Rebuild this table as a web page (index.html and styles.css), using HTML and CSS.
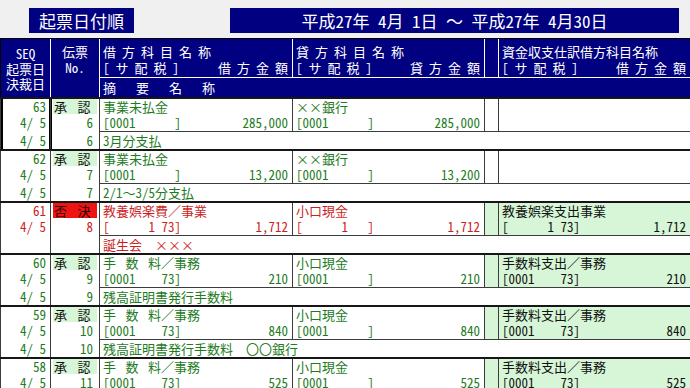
FILE: index.html
```html
<!DOCTYPE html>
<html lang="ja">
<head>
<meta charset="utf-8">
<title>起票日付順</title>
<link rel="stylesheet" href="styles.css">
</head>
<body>
<div class="top">
  <div class="title">起票日付順</div>
  <div class="range">平成27年 4月 1日 ～ 平成27年 4月30日</div>
</div>
<div class="sheet">
  <div class="head">
    <div class="h1"><span>SEQ</span><span>起票日</span><span>決裁日</span></div>
    <div class="h2">伝票<br>No.</div>
    <div class="hc"><div class="sp">借方科目名<i>称</i></div><div class="hl2"><span class="sp">[サ配税<i>]</i></span><span class="sp">借方金<i>額</i></span></div></div>
    <div class="hc"><div class="sp">貸方科目名<i>称</i></div><div class="hl2"><span class="sp">[サ配税<i>]</i></span><span class="sp">貸方金<i>額</i></span></div></div>
    <div class="hn"></div>
    <div class="hc"><div>資金収支仕訳借方科目名称</div><div class="hl2"><span class="sp">[サ配税<i>]</i></span><span class="sp">借方金<i>額</i></span></div></div>
    <div class="hmemo">摘要名<i>称</i></div>
  </div>

  <div class="rec sel">
    <div class="c1"><div>63</div><div>4/ 5</div><div class="l3">4/ 5</div></div>
    <div class="c2"><div class="st">承 認</div><div>6</div><div class="l3">6</div></div>
    <div class="cc"><div>事業未払金</div><div class="amt"><span>[0001      ]</span><span>285,000</span></div></div>
    <div class="cc"><div>××銀行</div><div class="amt"><span>[0001      ]</span><span>285,000</span></div></div>
    <div class="c5"></div>
    <div class="c6"></div>
    <div class="memo">3月分支払</div>
  </div>

  <div class="rec">
    <div class="c1"><div>62</div><div>4/ 5</div><div class="l3">4/ 5</div></div>
    <div class="c2"><div class="st">承 認</div><div>7</div><div class="l3">7</div></div>
    <div class="cc"><div>事業未払金</div><div class="amt"><span>[0001      ]</span><span>13,200</span></div></div>
    <div class="cc"><div>××銀行</div><div class="amt"><span>[0001      ]</span><span>13,200</span></div></div>
    <div class="c5"></div>
    <div class="c6"></div>
    <div class="memo">2/1～3/5分支払</div>
  </div>

  <div class="rec ng g">
    <div class="c1"><div>61</div><div>4/ 5</div><div class="l3"> </div></div>
    <div class="c2"><div class="st no">否 決</div><div>8</div><div class="l3"> </div></div>
    <div class="cc"><div>教養娯楽費／事業</div><div class="amt"><span>[      1 73]</span><span>1,712</span></div></div>
    <div class="cc"><div>小口現金</div><div class="amt"><span>[      1   ]</span><span>1,712</span></div></div>
    <div class="c5"></div>
    <div class="cc c6"><div>教養娯楽支出事業</div><div class="amt"><span>[      1 73]</span><span>1,712</span></div></div>
    <div class="memo">誕生会　×××</div>
  </div>

  <div class="rec g">
    <div class="c1"><div>60</div><div>4/ 5</div><div class="l3">4/ 5</div></div>
    <div class="c2"><div class="st">承 認</div><div>9</div><div class="l3">9</div></div>
    <div class="cc"><div class="ws">手 数 料／事務</div><div class="amt"><span>[0001    73]</span><span>210</span></div></div>
    <div class="cc"><div>小口現金</div><div class="amt"><span>[0001      ]</span><span>210</span></div></div>
    <div class="c5"></div>
    <div class="cc c6"><div>手数料支出／事務</div><div class="amt"><span>[0001    73]</span><span>210</span></div></div>
    <div class="memo">残高証明書発行手数料</div>
  </div>

  <div class="rec g">
    <div class="c1"><div>59</div><div>4/ 5</div><div class="l3">4/ 5</div></div>
    <div class="c2"><div class="st">承 認</div><div>10</div><div class="l3">10</div></div>
    <div class="cc"><div class="ws">手 数 料／事務</div><div class="amt"><span>[0001    73]</span><span>840</span></div></div>
    <div class="cc"><div>小口現金</div><div class="amt"><span>[0001      ]</span><span>840</span></div></div>
    <div class="c5"></div>
    <div class="cc c6"><div>手数料支出／事務</div><div class="amt"><span>[0001    73]</span><span>840</span></div></div>
    <div class="memo">残高証明書発行手数料　〇〇銀行</div>
  </div>

  <div class="rec g">
    <div class="c1"><div>58</div><div>4/ 5</div><div class="l3">4/ 5</div></div>
    <div class="c2"><div class="st">承 認</div><div>11</div><div class="l3">11</div></div>
    <div class="cc"><div class="ws">手 数 料／事務</div><div class="amt"><span>[0001    73]</span><span>525</span></div></div>
    <div class="cc"><div>小口現金</div><div class="amt"><span>[0001      ]</span><span>525</span></div></div>
    <div class="c5"></div>
    <div class="cc c6"><div>手数料支出／事務</div><div class="amt"><span>[0001    73]</span><span>525</span></div></div>
    <div class="memo">残高証明書発行手数料</div>
  </div>
</div>
</body>
</html>
```

FILE: styles.css
```css
* { box-sizing: border-box; margin: 0; padding: 0; }
html, body { width: 690px; height: 388px; overflow: hidden; }
body {
  background: #f0f0f0;
  font-family: "Noto Sans Mono CJK JP", "Noto Sans CJK JP", monospace;
  font-size: 13px;
  color: #000;
}
i { font-style: normal; letter-spacing: 0; }

.top { display: flex; gap: 96px; padding: 8px 0 5px 29px; }
.title, .range {
  height: 25px;
  background: #000080;
  color: #fff;
  font-size: 17px;
  line-height: 25px;
  text-align: center;
  white-space: pre;
}
.title { width: 105px; }
.range { width: 449px; }

.sheet { width: 690px; background: #fff; }

.head {
  display: grid;
  grid-template-columns: 49px 48px 192px 191px 13px 191px;
  grid-template-rows: 38px 19px;
  gap: 1px;
  background: #fff;
  border-top: 1px solid #000;
  border-left: 1px solid #000;
  color: #fff;
  font-size: 13px;
}
.head > div { background: #000080; }
.h1 {
  grid-row: 1 / 3;
  display: flex;
  flex-direction: column;
  justify-content: center;
  align-items: center;
}
.h1 span { display: block; height: 15px; line-height: 15px; }
.h2 { grid-row: 1 / 3; text-align: center; padding-top: 5px; line-height: 16px; }
.hc { padding: 5px 4px 0 3px; line-height: 16px; white-space: pre; }
.sp { letter-spacing: 6px; }
.hl2 { display: flex; justify-content: space-between; }
.hmemo { grid-column: 3 / 7; padding-left: 3px; line-height: 19px; letter-spacing: 20px; }

.rec {
  display: grid;
  grid-template-columns: 49px 48px 192px 191px 13px 191px;
  grid-template-rows: 32px 17px;
  gap: 1px;
  padding-left: 1px;
  background: #3c3c3c;
  border-top: 2px solid #161616;
  color: #1e7b1e;
}
.rec > div { background: #fff; }
.rec.ng { color: #cc1f1f; }

.c1, .c2 { grid-row: 1 / 3; text-align: right; line-height: 16px; white-space: pre; }
.c1 { padding-right: 4px; }
.c2 { padding-right: 6px; }
.l3 { margin-top: 1px; line-height: 17px; }
.sel .c1 { box-shadow: inset 2px 0 0 #000, inset -1px 0 0 #000; }
.sel .c2 { box-shadow: inset 1px 0 0 #000; }

.st {
  height: 15px;
  line-height: 15px;
  margin: 0 -4px 1px 2px;
  padding-left: 1px;
  text-align: left;
  letter-spacing: 2px;
  background: #d7f6d7;
  color: #111;
}
.st.no { background: #ee1414; color: #2a0000; }

.cc { padding: 0 4px 0 3px; line-height: 16px; white-space: pre; }
.amt { display: flex; justify-content: space-between; }
.ws { word-spacing: 3px; }

.g > .c5, .g > .c6 { background: #d7f6d7; }
.rec > .c6 { color: #111; }

.memo { grid-column: 3 / 7; padding-left: 3px; line-height: 17px; white-space: pre; }
```
